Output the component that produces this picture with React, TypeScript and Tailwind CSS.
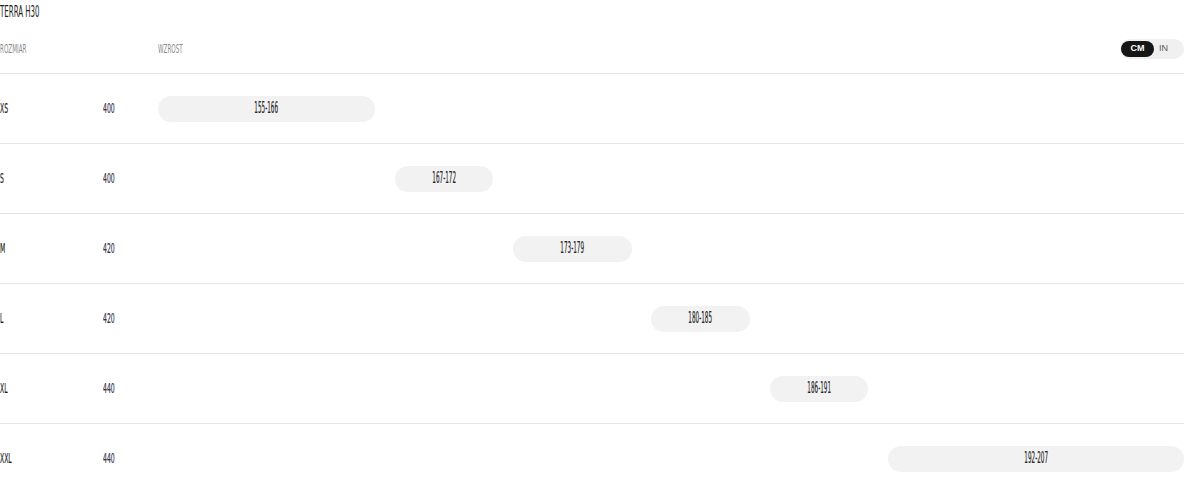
import React from "react";

const rows = [
  { size: "XS", weight: 400, min: 155, max: 166 },
  { size: "S", weight: 400, min: 167, max: 172 },
  { size: "M", weight: 420, min: 173, max: 179 },
  { size: "L", weight: 420, min: 180, max: 185 },
  { size: "XL", weight: 440, min: 186, max: 191 },
  { size: "XXL", weight: 440, min: 192, max: 207 },
];

const SCALE_MIN = 155;
const SCALE_MAX = 207;

const narrow = "font-['Liberation_Sans_Narrow','DejaVu_Sans_Condensed','Liberation_Sans',sans-serif]";

// the brand font is very compressed, squeeze a condensed face to fit
function Squeeze({ children, className = "" }: { children: React.ReactNode; className?: string }) {
  return <span className={`inline-block whitespace-nowrap ${className}`}>{children}</span>;
}

export default function App() {
  const span = SCALE_MAX - SCALE_MIN;
  return (
    <div className={`w-[1184px] h-[492px] overflow-hidden bg-white ${narrow}`}>
      <div className="h-6 flex items-center text-[16px] text-[#1e1e1e]">
        <Squeeze className="origin-left scale-x-[0.49]">TERRA H30</Squeeze>
      </div>

      <div className="h-[50px] flex items-center border-b border-[#e6e6e6] text-[12px] text-[#8a8a8a]">
        <div className="w-[158px]">
          <Squeeze className="origin-left scale-x-[0.52]">ROZMIAR</Squeeze>
        </div>
        <div className="flex-1">
          <Squeeze className="origin-left scale-x-[0.52]">WZROST</Squeeze>
        </div>
        <div className="flex items-center h-5 w-16 rounded-full bg-[#f0f0f0] pl-px font-['Liberation_Sans',Arial,sans-serif]">
          <span className="h-4 w-[33px] rounded-full bg-[#161616] text-white text-[9px] font-bold flex items-center justify-center">
            CM
          </span>
          <span className="ml-[5px] text-[9px] text-[#555]">IN</span>
        </div>
      </div>

      {rows.map((r) => (
        <div
          key={r.size}
          className="h-[70px] flex items-center border-b border-[#e6e6e6] text-[14px] [-webkit-text-stroke:0.2px]"
        >
          <div className="w-[103px] text-[#1e1e1e]">
            <Squeeze className="origin-left scale-x-[0.48]">{r.size}</Squeeze>
          </div>
          <div className="w-[55px] text-[#343448]">
            <Squeeze className="origin-left scale-x-[0.49]">{r.weight}</Squeeze>
          </div>
          <div className="flex-1">
            <div
              className="h-[26px] rounded-full bg-[#f2f2f2] flex items-center justify-center text-[#262626] text-[15px]"
              style={{
                marginLeft: `${((r.min - SCALE_MIN) / span) * 100}%`,
                width: `${((r.max - r.min) / span) * 100}%`,
              }}
            >
              <Squeeze className="origin-center scale-x-[0.42]">
                {r.min}-{r.max}
              </Squeeze>
            </div>
          </div>
        </div>
      ))}
    </div>
  );
}
